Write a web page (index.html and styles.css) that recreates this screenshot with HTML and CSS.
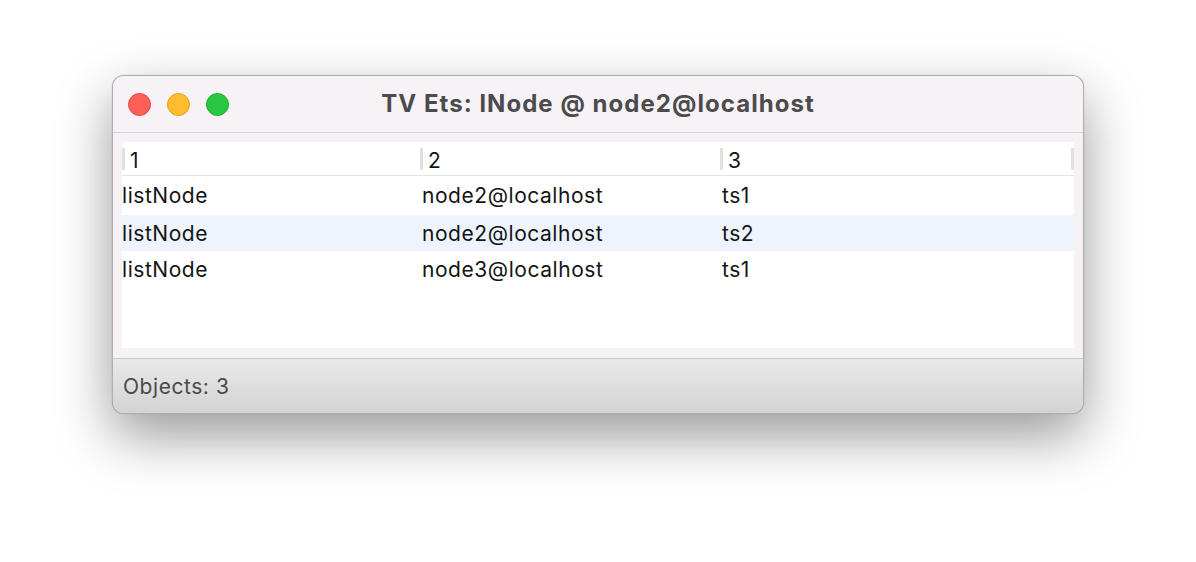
FILE: index.html
```html
<!DOCTYPE html>
<html>
<head>
<meta charset="utf-8">
<link rel="stylesheet" href="styles.css">
</head>
<body>
<div class="window">
  <div class="titlebar">
    <div class="lights">
      <span class="light red"></span>
      <span class="light yellow"></span>
      <span class="light green"></span>
    </div>
    <div class="title">TV Ets: lNode @ node2@localhost</div>
  </div>
  <div class="content">
    <div class="table">
      <div class="head">
        <div class="hcell">1</div>
        <div class="hcell">2</div>
        <div class="hcell last">3</div>
      </div>
      <div class="row r1"><div class="cell">listNode</div><div class="cell">node2@localhost</div><div class="cell">ts1</div></div>
      <div class="row r2 alt"><div class="cell">listNode</div><div class="cell">node2@localhost</div><div class="cell">ts2</div></div>
      <div class="row r3"><div class="cell">listNode</div><div class="cell">node3@localhost</div><div class="cell">ts1</div></div>
    </div>
  </div>
  <div class="status">Objects: 3</div>
</div>
</body>
</html>
```
FILE: styles.css
```css
html, body {
  margin: 0;
  padding: 0;
  background: #ffffff;
}
body {
  font-family: Inter, "Liberation Sans", sans-serif;
  width: 1196px;
  height: 562px;
  overflow: hidden;
  padding-top: 75px;
  padding-left: 112px;
  box-sizing: border-box;
}
.window {
  width: 972px;
  height: 339px;
  box-sizing: border-box;
  border-radius: 12px;
  border: 1px solid rgba(0,0,0,0.28);
  background: #f5f1f5;
  box-shadow: 0 22px 55px rgba(0,0,0,0.4), 0 0 1px rgba(0,0,0,0.3);
  overflow: hidden;
  display: flex;
  flex-direction: column;
}
.titlebar {
  height: 56px;
  flex: 0 0 56px;
  border-bottom: 1px solid #d3d0d3;
  display: flex;
  align-items: center;
  position: relative;
  background: #f6f2f6;
}
.lights {
  display: flex;
  gap: 16px;
  padding-left: 15px;
}
.light {
  width: 23px;
  height: 23px;
  border-radius: 50%;
  box-sizing: border-box;
  display: block;
}
.red { background: #fe5f57; border: 1px solid #e2463f; }
.yellow { background: #febc2e; border: 1px solid #e1a116; }
.green { background: #28c840; border: 1px solid #1aab29; }
.title {
  position: absolute;
  left: 0;
  right: 0;
  top: 0;
  height: 56px;
  line-height: 56px;
  text-align: center;
  font-weight: 700;
  font-size: 24px;
  color: #4b4a4d;
  letter-spacing: 1.05px;
}
.content {
  flex: 0 0 auto;
  padding: 9px 9px 10px 9px;
  border-bottom: 1px solid #c9c7c9;
}
.table {
  background: #ffffff;
  height: 206px;
  font-size: 21px;
  letter-spacing: 0.55px;
  color: #141414;
}
.head {
  display: grid;
  grid-template-columns: 298px 300px 1fr;
  height: 33px;
  border-bottom: 1px solid #e4e4e4;
  align-items: center;
}
.hcell {
  border-left: 3px solid #e0e0e0;
  height: 22px;
  line-height: 25px;
  padding-left: 5px;
  position: relative;
}
.hcell.last::after {
  content: "";
  position: absolute;
  right: 0;
  top: 0;
  width: 3px;
  height: 22px;
  background: #e0e0e0;
}
.row {
  display: grid;
  grid-template-columns: 300px 300px 1fr;
  align-items: center;
}
.r1 { height: 39px; }
.r2 { height: 36px; }
.r3 { height: 37px; }
.alt { background: #edf4fd; }
.cell {
  white-space: nowrap;
}
.status {
  flex: 1 1 auto;
  background: linear-gradient(#e9e9e9, #d3d3d3);
  font-size: 21px;
  letter-spacing: 0.55px;
  color: #4a4a4a;
  padding-left: 10px;
  display: flex;
  align-items: center;
}
```
